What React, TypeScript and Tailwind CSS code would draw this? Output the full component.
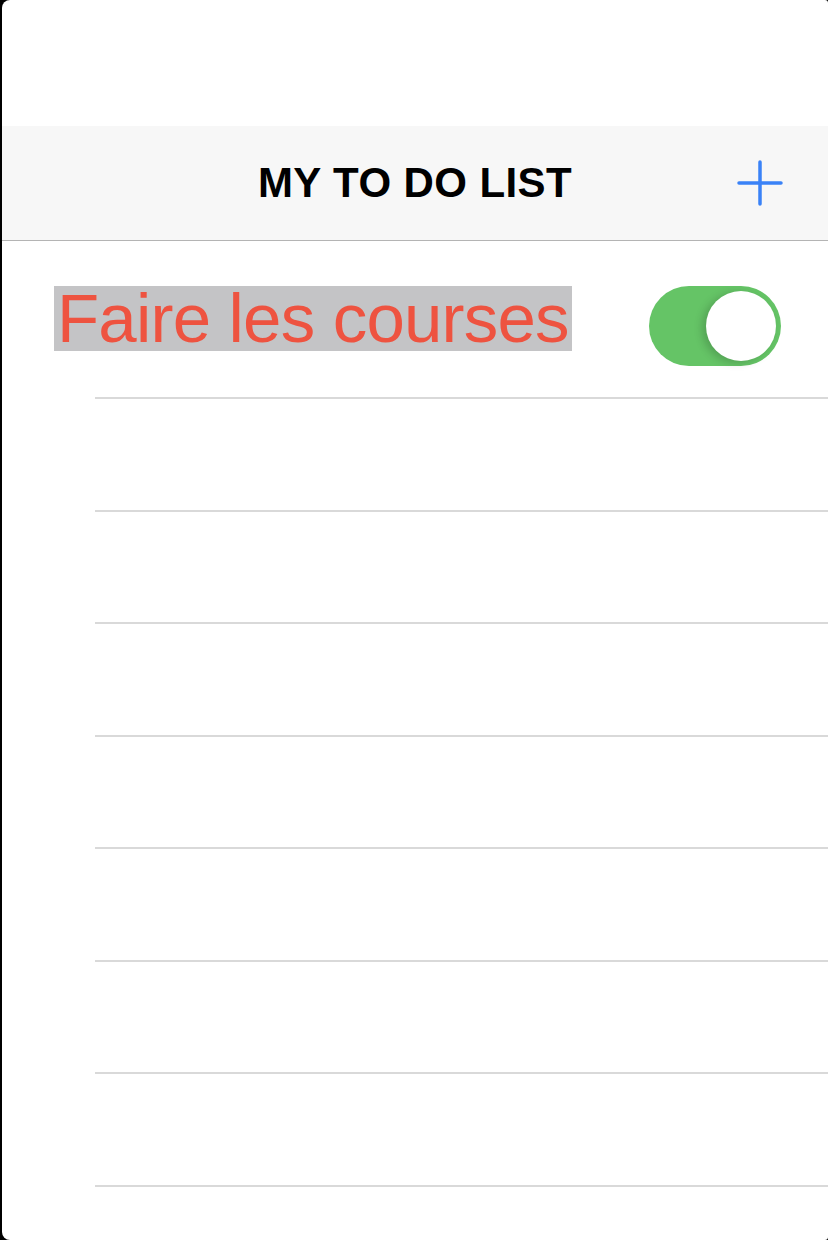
import { useState } from 'react'

const font = { fontFamily: '"Liberation Sans", Arial, sans-serif' }

function Toggle({ on, onChange }: { on: boolean; onChange: () => void }) {
  return (
    <button
      type="button"
      onClick={onChange}
      className={`relative w-[132px] h-[80px] rounded-full shrink-0 ${on ? 'bg-[#65c466]' : 'bg-[#e5e5ea]'}`}
    >
      <span
        className={`absolute top-[5px] w-[70px] h-[70px] rounded-full bg-white shadow-[-4px_2px_8px_rgba(0,0,0,0.18)] ${on ? 'right-[5px]' : 'left-[5px]'}`}
      />
    </button>
  )
}

export default function App() {
  const [done, setDone] = useState(true)
  const emptyRows = Array.from({ length: 7 })

  return (
    <div className="min-h-screen bg-black" style={font}>
      <div className="ml-[2px] h-[1240px] bg-white rounded-l-[8px] rounded-r-[3px] overflow-hidden flex flex-col">
        <div className="h-[126px] shrink-0" />

        {/* nav bar */}
        <div className="relative h-[115px] shrink-0 bg-[#f7f7f7] border-b border-[#b4b4b4] flex items-center justify-center">
          <h1 className="text-[42px] font-bold text-black leading-none tracking-[0.4px]">MY TO DO LIST</h1>
          <button type="button" className="absolute right-[45px] top-[34px] w-[46px] h-[46px] text-[#3a82f7]">
            <svg viewBox="0 0 46 46" width="46" height="46" fill="none" stroke="currentColor" strokeWidth="3.5" strokeLinecap="round">
              <path d="M23 2v42M2 23h42" />
            </svg>
          </button>
        </div>

        {/* first task */}
        <div className="h-[156px] shrink-0 flex items-start justify-between pt-[45px] pl-[52px] pr-[47px]">
          <span className="inline-block h-[65px] bg-[#c4c4c6] pl-[3px] pr-[3px] text-[69px] leading-[65px] tracking-[-0.8px] text-[#ee5340] whitespace-nowrap">
            Faire les courses
          </span>
          <Toggle on={done} onChange={() => setDone(!done)} />
        </div>
        <div className="ml-[93px] h-[2px] shrink-0 bg-[#d9d9d9]" />

        {emptyRows.map((_, i) => (
          <div key={i} className="shrink-0">
            <div className="h-[110.5px]" />
            <div className="ml-[93px] h-[2px] bg-[#d9d9d9]" />
          </div>
        ))}
      </div>
    </div>
  )
}
